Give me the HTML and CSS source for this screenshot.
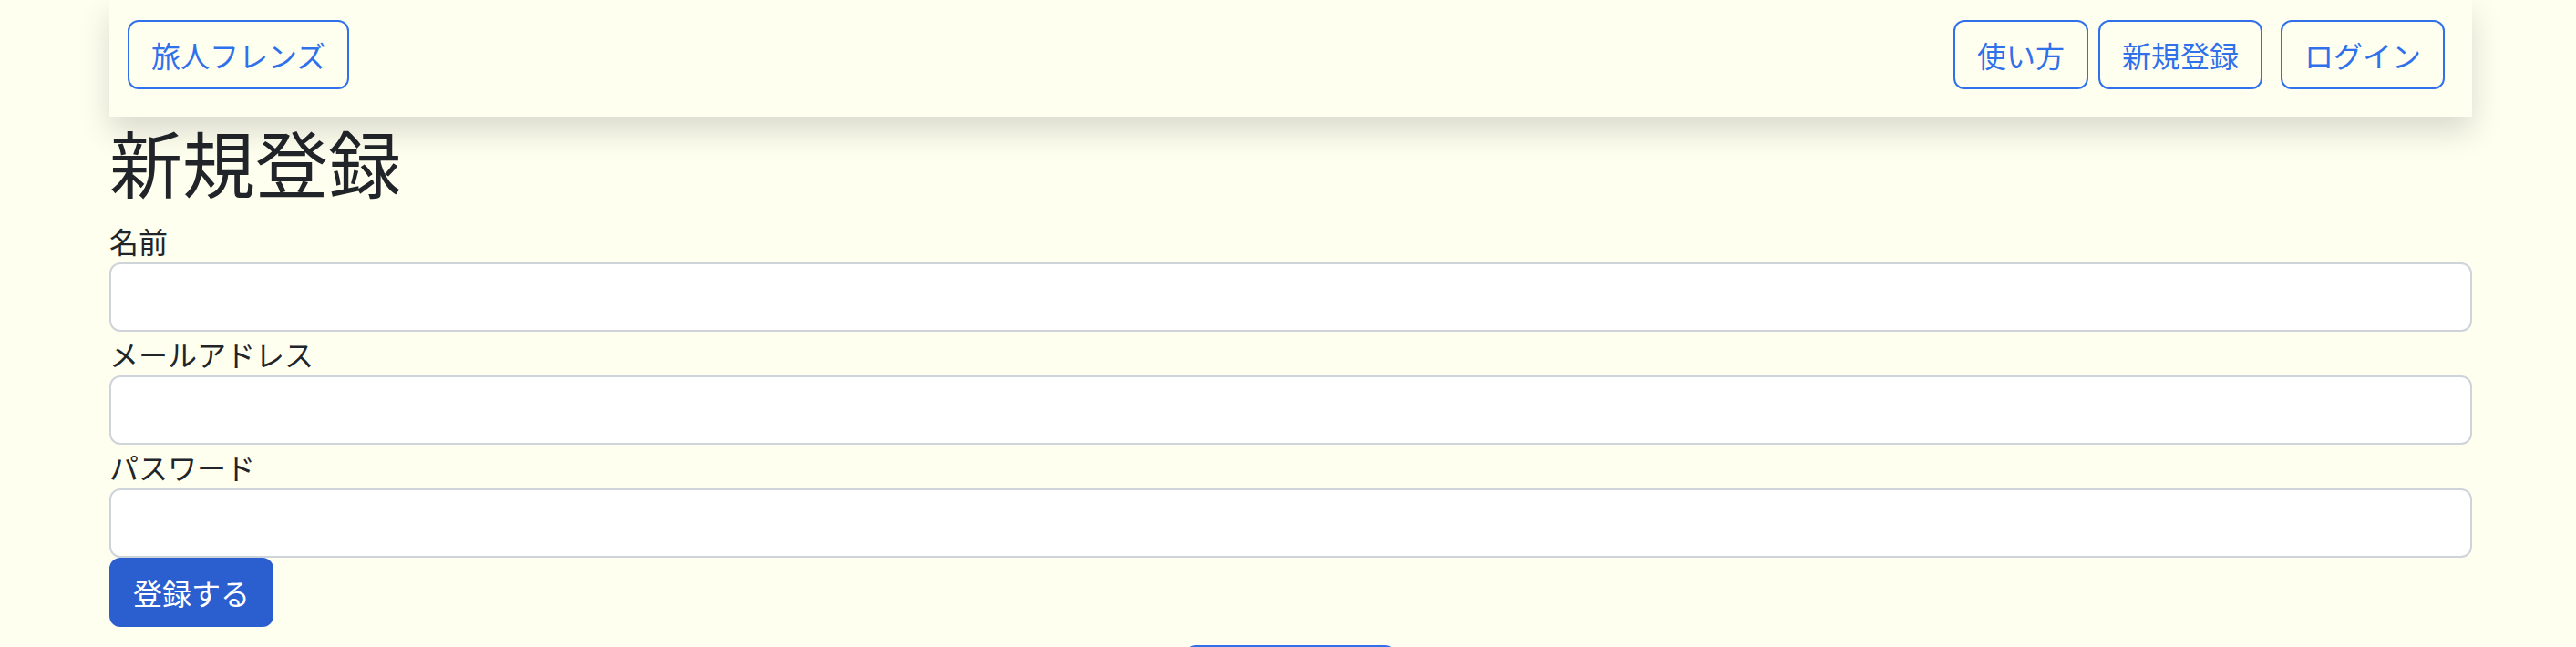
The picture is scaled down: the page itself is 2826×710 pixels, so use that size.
FILE: index.html
```html
<!DOCTYPE html>
<html lang="ja">
<head>
<meta charset="utf-8">
<title>新規登録 - 旅人フレンズ</title>
<link rel="stylesheet" href="styles.css">
</head>
<body>
<div class="container">
  <header class="navbar">
    <a class="btn btn-outline" href="#">旅人フレンズ</a>
    <nav class="nav">
      <a class="btn btn-outline" href="#">使い方</a>
      <a class="btn btn-outline" href="#">新規登録</a>
      <a class="btn btn-outline nav-login" href="#">ログイン</a>
    </nav>
  </header>
  <main>
    <h1 class="title">新規登録</h1>
    <form class="form">
      <label class="label" for="name">名前</label>
      <input class="input" id="name" type="text">
      <label class="label" for="email">メールアドレス</label>
      <input class="input" id="email" type="email">
      <label class="label" for="password">パスワード</label>
      <input class="input" id="password" type="password">
      <div class="actions">
        <button class="btn btn-primary" type="submit">登録する</button>
      </div>
    </form>
    <div class="footer">
      <a class="btn btn-outline footer-btn" href="#" aria-label="トップへ戻る"></a>
    </div>
  </main>
</div>
</body>
</html>
```

FILE: styles.css
```css
html, body {
  margin: 0;
  padding: 0;
  background: #fffff0;
}
body {
  font-family: "Noto Sans CJK JP", "Noto Sans", sans-serif;
  color: #212529;
  font-size: 32px;
  line-height: 48px;
  overflow: hidden;
}
.container {
  width: 2592px;
  margin-left: 120px;
}
.navbar {
  display: flex;
  justify-content: space-between;
  align-items: center;
  padding: 22px 30px 30px 20px;
  background: #fffff0;
  box-shadow: 0 16px 32px rgba(0, 0, 0, 0.15);
  position: relative;
  z-index: 1;
}
.nav {
  display: flex;
  gap: 11px;
}
.nav-login {
  margin-left: 9px;
}
.btn {
  display: inline-block;
  box-sizing: border-box;
  height: 76px;
  padding: 12px 24px;
  border: 2px solid transparent;
  border-radius: 12px;
  font-family: inherit;
  font-size: 32px;
  line-height: 48px;
  text-decoration: none;
  white-space: nowrap;
  cursor: pointer;
}
.btn-outline {
  color: #3070ea;
  border-color: #3070ea;
  background: transparent;
}
.btn-primary {
  color: #ffffff;
  background: #2b5ece;
  border-color: #2b5ece;
}
.title {
  margin: 0 0 16px 0;
  font-size: 80px;
  line-height: 96px;
  font-weight: 400;
}
.form {
  display: flex;
  flex-direction: column;
  align-items: stretch;
}
.label {
  display: block;
  font-size: 32px;
  line-height: 48px;
}
.input {
  display: block;
  box-sizing: border-box;
  width: 100%;
  height: 76px;
  margin: 0;
  padding: 12px 24px;
  border: 2px solid #ced4da;
  border-radius: 12px;
  background: #ffffff;
  font-family: inherit;
  font-size: 32px;
}
.actions {
  display: flex;
}
.footer {
  display: flex;
  justify-content: center;
  margin-top: 20px;
}
.footer-btn {
  width: 232px;
  text-align: center;
}
```
